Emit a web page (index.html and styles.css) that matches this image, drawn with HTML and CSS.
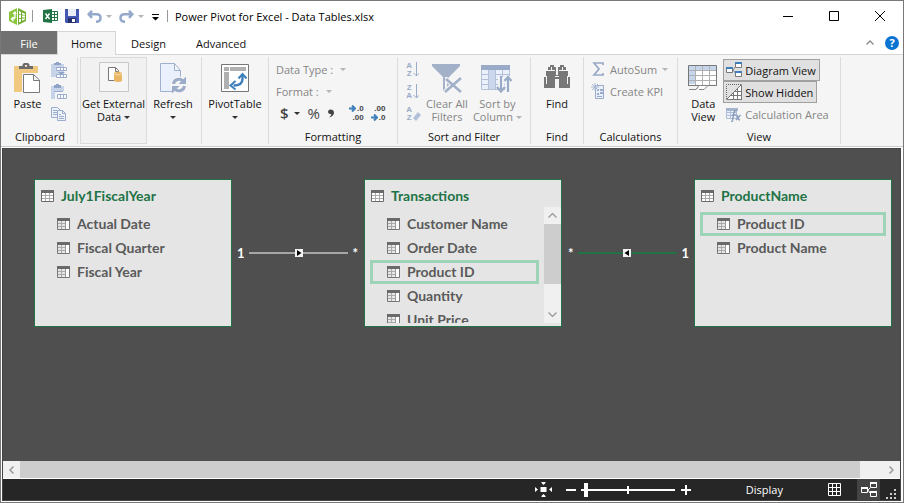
FILE: index.html
```
<!DOCTYPE html>
<html lang="en">
<head>
    <meta charset="UTF-8">
    <title>Power Pivot for Excel - Data Tables.xlsx</title>
    <meta name="viewport" content="width=device-width, initial-scale=1.0">
    <link rel="stylesheet" href="styles.css">
</head>
<body>
    <!-- shared table / column icons -->
    <svg class="defs" width="0" height="0">
        <symbol id="table-icon" viewBox="0 0 13 12">
            <path fill="#fff" d="M0 0h13v12H0z"/>
            <path stroke="#aaa" d="M1 5.500h11M1 8.500h11M4.500 3v8M8.500 3v8"/>
            <path fill="none" stroke="#6a6a6a" d="M.5.5h12v11H.5z"/>
            <path fill="#6a6a6a" d="M0 0h13v3H0z"/>
        </symbol>
        <symbol id="column-icon" viewBox="0 0 13 12">
            <path fill="#e6e6e6" d="M0 0h13v12H0z"/>
            <path fill="#fff" d="M9 3h3v8H9z"/>
            <path stroke="#aaa" d="M1 5.500h8M1 8.500h8M4.500 3v8"/>
            <path stroke="#999" d="M8.500 3v8"/>
            <path fill="none" stroke="#777" d="M.5.5h12v11H.5z"/>
            <path fill="#6a6a6a" d="M0 0h13v3H0z"/>
        </symbol>
    </svg>

    <div class="window">
        <header class="titlebar">
            <svg class="logo" width="17" height="17" viewBox="0 0 17 17">
                <path fill="#8cc63f" d="M8 0v17L0 13V4z"/>
                <path fill="#6fae2c" d="M9 0l8 4v9l-8 4z"/>
                <path fill="#fff" d="M10 3l2 1v2.500l-2-.5zM13 4.500l3 1.200V7l-3-.5zM10 7h2v3h-2zM13 7.500h3v2h-3zM10 11l2-.2v2.700l-2 1zM13 10.700l3-.5v1.300l-3 1.300z"/>
                <path fill="none" stroke="#fff" stroke-width="1.300" d="M6 4v5q0 2-3 2M4 6l2-2 1 2M4.500 9L2.500 11l2 2"/>
            </svg>
            <span class="bar-sep"></span>
            <button class="quick excel" aria-label="Switch to workbook">
                <svg width="15" height="14" viewBox="0 0 15 14">
                    <path fill="#fff" stroke="#217346" d="M8 2.500h6.500v9H8M8 5.500h6M8 8.500h6M11.500 2v10"/>
                    <path fill="#217346" d="M0 1l9-1v14l-9-1z"/>
                    <path stroke="#fff" stroke-width="1.400" d="M2.500 4.500l4 5.500M6.500 4.500L2.500 10"/>
                </svg>
            </button>
            <button class="quick save" aria-label="Save">
                <svg width="14" height="14" viewBox="0 0 14 14">
                    <path fill="#4257b2" d="M0 0h14v14H1l-1-1z"/>
                    <path fill="#e8edf8" d="M3 0h8v7H3z"/>
                    <path fill="#24306e" d="M3 9h8v5H3z"/>
                    <path fill="#fff" d="M7 10h3v3H7z"/>
                </svg>
            </button>
            <button class="quick undo" aria-label="Undo">
                <svg width="15" height="13" viewBox="0 0 15 13"><path fill="none" stroke="#94a9cc" stroke-width="2.500" d="M5 .8L1.700 4.300 5 7.800M2 4.300h7.500q4 0 4 3.700t-4.500 3.800"/></svg>
            </button>
            <span class="arrow dim"></span>
            <button class="quick redo" aria-label="Redo">
                <svg width="15" height="13" viewBox="0 0 15 13"><path fill="none" stroke="#94a9cc" stroke-width="2.500" d="M10 .8l3.300 3.500L10 7.800M13 4.300H5.500q-4 0-4 3.700T6 11.800"/></svg>
            </button>
            <span class="arrow dim"></span>
            <button class="quick customize" aria-label="Customize Quick Access Toolbar">
                <svg width="7" height="7" viewBox="0 0 7 7"><path d="M0 0h7v1H0zM0 3h7L3.500 6.500z"/></svg>
            </button>
            <span class="bar-sep"></span>
            <h1 class="title">Power Pivot for Excel - Data Tables.xlsx</h1>
            <div class="caption">
                <button aria-label="Minimize"><svg width="10" height="10"><path stroke="#000" d="M0 5.500h10"/></svg></button>
                <button aria-label="Maximize"><svg width="10" height="10"><path fill="none" stroke="#000" d="M.5.5h9v9h-9z"/></svg></button>
                <button aria-label="Close"><svg width="10" height="10"><path stroke="#000" d="M0 0l10 10M10 0L0 10"/></svg></button>
            </div>
        </header>

        <nav class="tabs">
            <button class="tab file">File</button>
            <button class="tab active">Home</button>
            <button class="tab">Design</button>
            <button class="tab">Advanced</button>
            <div class="tabs-end">
                <button class="collapse" aria-label="Collapse the ribbon"><svg width="8" height="5"><path fill="none" stroke="#888" stroke-width="1.300" d="M.5 4.500L4 1l3.500 3.500"/></svg></button>
                <button class="help" aria-label="Help">?</button>
            </div>
        </nav>

        <div class="ribbon">
            <section class="group clipboard">
                <div class="tools">
                    <button class="big">
                        <svg width="28" height="32" viewBox="0 0 28 32">
                            <path fill="#f0c880" d="M1 4h24v26H1z"/>
                            <path fill="#f5f5f5" d="M9 11h18v21H9z"/>
                            <path fill="#6d6d6d" d="M6 7V4h3.500V2.500L11 1h4l1.500 1.500V4H20v3zM12 3v2h2V3z"/>
                            <path fill="#fff" stroke="#7a7a7a" d="M10.500 12.500h10l6 5.500v12.500h-16zM20.500 12.500v6h6"/>
                        </svg>
                        <span>Paste</span>
                    </button>
                    <div class="stack">
                        <button class="mini" aria-label="Paste Append">
                            <svg width="16" height="16"><path fill="#c6d3e8" d="M0 2h13v13H0z"/><path fill="#8fa3c6" d="M3 3V1h2V0h3v1h2v2z"/><path fill="#fff" stroke="#9aadcc" d="M5.500 5.500h10v3h-10zM9.500 5v4M12.500 5v4M5.500 12.500h10v3h-10zM9.500 12v4M12.500 12v4"/><path fill="#8fa3c6" d="M7 10h7l-3.500 3z"/></svg>
                        </button>
                        <button class="mini" aria-label="Paste Replace">
                            <svg width="16" height="16"><path fill="#c6d3e8" d="M0 2h13v13H0z"/><path fill="#8fa3c6" d="M3 4V1h2V0h3v1h2v3z"/><path fill="#f5f5f5" d="M4 7h12v9H4z"/><path fill="#fff" stroke="#9aadcc" d="M6.500 10.500h9v4h-9zM9.500 10v5M12.500 10v5M3 7.500h9"/></svg>
                        </button>
                        <button class="mini" aria-label="Copy">
                            <svg width="16" height="16"><path fill="#eef3fb" stroke="#9aadcc" d="M.5 1.500h6l3 3v7h-9zM2 4.500h4M2 6.500h4M2 8.500h4"/><path fill="#eef3fb" stroke="#9aadcc" d="M6.500 4.500h5l3 3v7h-8zM11.500 4.500v3h3M8 8.500h2M8 10.500h5M8 12.500h5"/></svg>
                        </button>
                    </div>
                </div>
                <h2>Clipboard</h2>
            </section>

            <section class="group external">
                <button class="big boxed">
                    <svg width="30" height="30">
                        <path fill="#f5f5f5" stroke="#c8c8c8" d="M.5.5h29v29H.5z"/>
                        <path fill="#fff" stroke="#777" d="M16 18.500H9.500v-13h7l3 3V11M16.500 5.500v4h3"/>
                        <path fill="#e9b665" d="M15 11q4-3 8 0v8q-4 2-8 0z"/>
                        <path fill="none" stroke="#f8dcae" d="M15 12q4 2 8 0"/>
                    </svg>
                    <span>Get External<br>Data <i class="arrow"></i></span>
                </button>
            </section>

            <section class="group refresh">
                <button class="big">
                    <svg width="28" height="32" viewBox="0 0 28 32">
                        <path fill="#eaf1fc" stroke="#9fb1d0" d="M1.500 1.500h14l6 7v21h-20zM15.500 1.500v7h6"/>
                        <circle cx="20" cy="23" r="8.500" fill="#f5f5f5"/>
                        <path fill="none" stroke="#9cadc9" stroke-width="3" d="M14.500 22a5.500 5.500 0 0 1 9.500-3M25.500 24a5.500 5.500 0 0 1-9.500 3"/>
                        <path fill="#9cadc9" d="M27 14.500V22h-7.500zM13 31.500V24h7.500z"/>
                    </svg>
                    <span>Refresh<br><i class="arrow"></i></span>
                </button>
            </section>

            <section class="group pivot">
                <button class="big">
                    <svg width="28" height="32" viewBox="0 0 28 32">
                        <path fill="#fff" stroke="#777" d="M.5 2.500h27v27H.5z"/>
                        <path fill="#b0b0b0" d="M3 5h5v4H3zM9 5h16v4H9zM3 10h5v17H3z"/>
                        <path fill="none" stroke="#3f7fba" stroke-width="2.400" d="M21.500 13v4q0 6.500-9 6.500"/>
                        <path fill="none" stroke="#3f7fba" stroke-width="2" d="M17.500 16.500l4-4.500 4 4.500M14.500 19l-5 4.500 5 4"/>
                    </svg>
                    <span>PivotTable<br><i class="arrow"></i></span>
                </button>
            </section>

            <section class="group formatting">
                <div class="format-rows">
                    <button class="line" disabled>Data Type : <i class="arrow"></i></button>
                    <button class="line" disabled>Format : <i class="arrow"></i></button>
                    <div class="numbers">
                        <button class="currency" aria-label="Currency">$ <i class="arrow"></i></button>
                        <button aria-label="Percent">%</button>
                        <button class="comma" aria-label="Thousands Separator"><svg width="7" height="9"><path fill="#444" d="M2.500.5a2.300 2.300 0 1 0 .8 4.400Q3 7 1 8.500q5-1.500 5-5Q5.800.5 2.500.5z"/></svg></button>
                        <button class="decimal" aria-label="Increase Decimal">
                            <span><svg width="7" height="7"><path fill="none" stroke="#3f7fba" stroke-width="2" d="M0 3.500h5M3 .5l3 3-3 3"/></svg>.0</span>
                            <span>.00</span>
                        </button>
                        <button class="decimal" aria-label="Decrease Decimal">
                            <span>.00</span>
                            <span><svg width="7" height="7"><path fill="none" stroke="#3f7fba" stroke-width="2" d="M0 3.500h5M3 .5l3 3-3 3"/></svg>.0</span>
                        </button>
                    </div>
                </div>
                <h2>Formatting</h2>
            </section>

            <section class="group sorting">
                <div class="tools">
                    <div class="stack">
                        <button class="mini sort" disabled aria-label="Sort A to Z"><span class="letters"><span>A</span><span>Z</span></span><svg width="6" height="15"><path fill="none" stroke="#9aabc8" d="M3.500 0v14M.5 11l3 3 3-3"/></svg></button>
                        <button class="mini sort" disabled aria-label="Sort Z to A"><span class="letters"><span>Z</span><span>A</span></span><svg width="6" height="15"><path fill="none" stroke="#9aabc8" d="M3.500 0v14M.5 11l3 3 3-3"/></svg></button>
                        <button class="mini sort" disabled aria-label="Clear Sort"><span class="letters"><span>A</span><span>Z</span></span><svg width="8" height="15"><path fill="#b3c1d8" d="M5 6l3 3-5 6-3-3z"/></svg></button>
                    </div>
                    <button class="big" disabled>
                        <svg width="30" height="32" viewBox="0 0 30 32">
                            <path fill="#a2b0c8" d="M0 2h28v2L17 15v10l-6 4V15L0 4z"/>
                            <path fill="#f5f5f5" d="M13 15h2v10l-2 1.500z"/>
                            <path stroke="#f5f5f5" stroke-width="5" d="M14 17l15 12M29 16L13 30"/>
                            <path stroke="#a2b0c8" stroke-width="2.600" d="M14 17l15 13M29 16L13 30"/>
                        </svg>
                        <span>Clear All<br>Filters</span>
                    </button>
                    <button class="big" disabled>
                        <svg width="32" height="32" viewBox="0 0 32 32">
                            <path fill="#eaf1fc" stroke="#b3c1d8" d="M.5 3.500h28v24H.5zM0 12.500h28M0 17.500h28M0 22.500h28M7.500 7v20M14.500 7v20M21.500 7v20"/>
                            <path fill="#cbd8eb" d="M8 8h6v19H8z"/>
                            <path fill="#9aabc8" d="M0 3h29v5H0z"/>
                            <path stroke="#f5f5f5" stroke-width="6" d="M20 15v16M27 14v16"/>
                            <path fill="none" stroke="#9aabc8" stroke-width="2.200" d="M20 14v15M16 25l4 4.500 4-4.500M27 30V15M23.500 19l3.500-4 3.500 4"/>
                        </svg>
                        <span>Sort by<br>Column <i class="arrow"></i></span>
                    </button>
                </div>
                <h2>Sort and Filter</h2>
            </section>

            <section class="group find">
                <button class="big">
                    <svg width="26" height="32" viewBox="0 0 26 32">
                        <path fill="#777" d="M6 3h4v2h2v8h2V5h2V3h4v2h2v4h2v6h2v11h-11V17h-4v9H0V15h2V9h2V5h2z"/>
                        <path stroke="#f5f5f5" d="M4 8.500h7M15 8.500h7M2.500 14v8M23.500 14v8M7.500 5v3M18.500 5v3M11 14.500h4"/>
                    </svg>
                    <span>Find</span>
                </button>
                <h2>Find</h2>
            </section>

            <section class="group calculations">
                <div class="format-rows">
                    <button class="line" disabled><svg width="16" height="16"><path fill="none" stroke="#96a8c8" stroke-width="1.700" d="M12 4V2H3l5 6-5 6h9v-2"/></svg>AutoSum <i class="arrow"></i></button>
                    <button class="line" disabled><svg width="16" height="16"><path fill="#eaf1fc" stroke="#9aabc8" d="M4.500 2.500h8v13h-8z"/><path fill="#9aabc8" d="M6 6h2v2H6zM6 10h2v2H6zM9 6h3v2H9zM9 9h3v2H9zM6 13h5v1H6z"/><path stroke="#a9b8d2" d="M4 0v8M0 4h8M1 1l6 6M7 1L1 7"/></svg>Create KPI</button>
                </div>
                <h2>Calculations</h2>
            </section>

            <section class="group view">
                <div class="tools">
                    <button class="big">
                        <svg width="30" height="32" viewBox="0 0 30 32">
                            <path fill="#fff" d="M.5 3.500h28v19H.5z"/>
                            <path fill="#c5d6ec" d="M1 4h27v4H1zM1 4h6v18H1z"/>
                            <path fill="none" stroke="#b0b0b0" d="M0 8.500h28M0 13.500h28M0 18.500h28M7.500 4v19M14.500 4v19M21.500 4v19"/>
                            <path fill="none" stroke="#777" d="M.5 24V3.500h28v20H.5"/>
                            <path fill="#fff" stroke="#888" d="M1 27.500h7l3-4h9l-4 4h-5M8 27.500l2-2"/>
                        </svg>
                        <span>Data<br>View</span>
                    </button>
                    <div class="views">
                        <button class="toggle on">
                            <svg width="16" height="16"><path fill="none" stroke="#888" d="M7 8l3-4M7 8l3 4"/><path fill="#fff" stroke="#777" d="M.5 5.500h6v5h-6zM9.500.5h6v5h-6zM9.500 9.500h6v5h-6z"/><path fill="#3f7fba" d="M0 5h7v2H0zM9 0h7v2H9zM9 9h7v2H9z"/></svg>Diagram View</button>
                        <button class="toggle on">
                            <svg width="16" height="16"><path fill="#fff" d="M1 15L15 1v14z"/><path stroke="#777" d="M1 15.500h14M15.500 1v15M5 11.500h10M9 7.500h6M7.500 9v6M11.500 5v10M.5 15.500l15-15"/><path fill="none" stroke="#666" stroke-dasharray="1 1" d="M.5 15V.5H15"/></svg>Show Hidden</button>
                        <button class="toggle" disabled>
                            <svg width="16" height="16"><path fill="#eaf1fc" stroke="#afbdd5" d="M.5 2.500h10v10H.5zM0 6.500h10M0 9.500h8M4.500 3v9"/><path fill="#a5b5cf" d="M0 2h12v3H0z"/><path fill="none" stroke="#8b9dbd" stroke-width="1.400" d="M10.500 5q-2-1-2.500 1.500l-1.500 8Q6 16 5 15.500M6 9h4M10.500 9q1 0 1.500 2.500t2 2.500M14.500 9l-4.500 5"/></svg>Calculation Area</button>
                    </div>
                </div>
                <h2>View</h2>
            </section>
        </div>

        <main class="workspace">
            <div class="canvas">
                <article class="node node-calendar">
                    <h3><svg width="13" height="12"><use href="#table-icon"/></svg>July1FiscalYear</h3>
                    <div class="node-body">
                        <ul>
                            <li><svg width="13" height="12"><use href="#column-icon"/></svg>Actual Date</li>
                            <li><svg width="13" height="12"><use href="#column-icon"/></svg>Fiscal Quarter</li>
                            <li><svg width="13" height="12"><use href="#column-icon"/></svg>Fiscal Year</li>
                        </ul>
                    </div>
                </article>

                <div class="relation relation-date">
                    <span>1</span>
                    <div class="link"><svg width="8" height="8"><path fill="#f4f4f4" d="M0 0h8v8H0z"/><path d="M2 1l4.500 3L2 7z"/></svg></div>
                    <span class="many">*</span>
                </div>

                <article class="node node-transactions">
                    <h3><svg width="13" height="12"><use href="#table-icon"/></svg>Transactions</h3>
                    <div class="node-body">
                        <ul>
                            <li><svg width="13" height="12"><use href="#column-icon"/></svg>Customer Name</li>
                            <li><svg width="13" height="12"><use href="#column-icon"/></svg>Order Date</li>
                            <li class="selected"><svg width="13" height="12"><use href="#column-icon"/></svg>Product ID</li>
                            <li><svg width="13" height="12"><use href="#column-icon"/></svg>Quantity</li>
                            <li><svg width="13" height="12"><use href="#column-icon"/></svg>Unit Price</li>
                        </ul>
                        <div class="vscroll">
                            <button aria-label="Scroll up"><svg width="9" height="5"><path fill="none" stroke="#999" stroke-width="1.300" d="M.5 4.500l4-4 4 4"/></svg></button>
                            <div class="vthumb"></div>
                            <button class="down" aria-label="Scroll down"><svg width="9" height="5"><path fill="none" stroke="#999" stroke-width="1.300" d="M.5.5l4 4 4-4"/></svg></button>
                        </div>
                    </div>
                </article>

                <div class="relation relation-product">
                    <span class="many">*</span>
                    <div class="link"><svg width="8" height="8"><path fill="#f4f4f4" d="M0 0h8v8H0z"/><path d="M6 1L1.500 4 6 7z"/></svg></div>
                    <span>1</span>
                </div>

                <article class="node node-product">
                    <h3><svg width="13" height="12"><use href="#table-icon"/></svg>ProductName</h3>
                    <div class="node-body">
                        <ul>
                            <li class="selected"><svg width="13" height="12"><use href="#column-icon"/></svg>Product ID</li>
                            <li><svg width="13" height="12"><use href="#column-icon"/></svg>Product Name</li>
                        </ul>
                    </div>
                </article>
            </div>

            <div class="hscroll">
                <button aria-label="Scroll left"><svg width="5" height="8"><path fill="none" stroke="#999" stroke-width="1.500" d="M4.500.5L1 4l3.500 3.500"/></svg></button>
                <div class="hthumb"></div>
                <button class="right" aria-label="Scroll right"><svg width="5" height="8"><path fill="none" stroke="#999" stroke-width="1.500" d="M.5.5L4 4 .5 7.500"/></svg></button>
            </div>

            <footer class="statusbar">
                <button class="fit" aria-label="Fit to screen"><svg width="17" height="15"><path fill="#fff" d="M5.500 5h6v5h-6zM6.500 0h4v1l-2 2-2-2zM6.500 15h4v-1l-2-2-2 2zM0 5l3 2.500L0 10zM17 5l-3 2.500 3 2.500z"/></svg></button>
                <button class="zoom-out" aria-label="Zoom out"><svg width="10" height="10"><path stroke="#fff" stroke-width="2" d="M0 5h10"/></svg></button>
                <input class="zoom" type="range" min="0" max="100" value="4" aria-label="Zoom">
                <button class="zoom-in" aria-label="Zoom in"><svg width="10" height="10"><path stroke="#fff" stroke-width="2" d="M0 5h10M5 0v10"/></svg></button>
                <button class="display">Display</button>
                <button class="grid-view" aria-label="Grid view"><svg width="13" height="13"><path fill="none" stroke="#fff" d="M.5.5h12v12H.5zM0 4.500h13M0 8.500h13M4.500 0v13M8.500 0v13"/></svg></button>
                <button class="diagram-view" aria-label="Diagram view"><svg width="16" height="16"><path fill="none" stroke="#fff" d="M.5 5.500h6v5h-6zM9.500.5h6v5h-6zM9.500 9.500h6v5h-6zM7 8l2-2M7 8l2 3"/><path fill="#fff" d="M0 5h7v2H0zM9 0h7v2H9zM9 9h7v2H9z"/></svg></button>
                <svg class="grip" width="11" height="11"><path fill="#ccc" d="M8 0h2v2H8zM4 4h2v2H4zM8 4h2v2H8zM0 8h2v2H0zM4 8h2v2H4zM8 8h2v2H8z"/></svg>
            </footer>
        </main>
    </div>
</body>
</html>
```

FILE: styles.css
```
* {
    box-sizing: border-box;
}
body {
    margin: 0;
    font: 11px/13px "Open Sans", "Noto Sans", sans-serif;
    color: #111;
}
button {
    margin: 0;
    padding: 0;
    border: 0;
    background: none;
    font: inherit;
    color: inherit;
    white-space: nowrap;
}
h1, h2, h3, ul {
    margin: 0;
    padding: 0;
    font: inherit;
    list-style: none;
}
svg {
    display: block;
    flex: none;
}
.defs {
    position: absolute;
}
.window {
    display: flex;
    flex-direction: column;
    height: 100vh;
    border: 1px solid #787878;
    background: #fff;
}
.arrow {
    display: inline-block;
    border: 3px solid transparent;
    border-top-color: #333;
    border-bottom: 0;
    vertical-align: 2px;
}
.arrow.dim, button:disabled .arrow {
    border-top-color: #b4b4b4;
}

/* title bar */
.titlebar {
    display: flex;
    align-items: center;
    height: 30px;
    padding-left: 8px;
}
.bar-sep {
    width: 1px;
    height: 12px;
    background: #999;
}
.logo {
    margin-right: 6px;
}
.excel {
    margin-left: 10px;
}
.save {
    margin-left: 7px;
}
.undo {
    margin: 0 4px 0 8px;
}
.redo {
    margin: 0 4px 0 7px;
}
.customize {
    margin: 2px 8px 0 8px;
}
.title {
    margin-left: 7px;
    color: #000;
}
.caption {
    display: flex;
    margin-left: auto;
}
.caption button {
    display: flex;
    align-items: center;
    justify-content: center;
    width: 46px;
    height: 28px;
}

/* tabs */
.tabs {
    display: flex;
    height: 23px;
}
.tab {
    padding: 0 14px;
    border: 1px solid transparent;
    border-bottom: 0;
}
.tab.file {
    width: 56px;
    background: #717171;
    color: #fff;
}
.tab.active {
    z-index: 1;
    margin-bottom: -1px;
    padding: 0 13px 1px;
    border-color: #d5d5d5;
    background: #f5f5f5;
}
.tabs-end {
    display: flex;
    align-items: center;
    gap: 11px;
    margin-left: auto;
    padding-right: 4px;
}
.help {
    width: 14px;
    height: 14px;
    border-radius: 50%;
    background: #0b74d1;
    color: #fff;
    font-weight: bold;
    line-height: 14px;
}

/* ribbon */
.ribbon {
    display: flex;
    height: 93px;
    padding-top: 2px;
    border-top: 1px solid #d5d5d5;
    border-bottom: 1px solid #ccc;
    background: #f5f5f5;
}
.group {
    display: flex;
    flex: none;
    flex-direction: column;
    align-items: center;
    height: 87px;
    padding-top: 5px;
    border-right: 1px solid #dcdcdc;
}
.group h2 {
    margin-top: auto;
    line-height: 14px;
}
.tools {
    display: flex;
}
.big {
    display: flex;
    flex-direction: column;
    align-items: center;
    height: 61px;
}
.big span {
    height: 26px;
    margin-top: auto;
}
button:disabled {
    color: #858585;
}
.stack {
    display: flex;
    flex-direction: column;
    gap: 6px;
}
.mini {
    display: flex;
    height: 16px;
}
.clipboard {
    width: 77px;
    padding-left: 2px;
}
.clipboard .tools {
    gap: 9px;
}
.external {
    width: 69px;
    padding: 0 0 0 2px;
    border: 0;
}
.boxed {
    width: 67px;
    height: 87px;
    padding: 4px 0 20px;
    border: 1px solid #dadada;
    background: #f1f1f1;
}
.refresh {
    width: 55px;
    padding-right: 2px;
}
.pivot {
    width: 67px;
}
.formatting {
    width: 129px;
}
.format-rows {
    display: flex;
    flex-direction: column;
    align-items: flex-start;
    width: 100%;
    margin-top: -4px;
    padding-left: 7px;
}
.line {
    display: flex;
    align-items: center;
    gap: 5px;
    height: 22px;
}
.line .arrow {
    margin-left: 2px;
}
.numbers {
    display: flex;
    align-items: center;
    height: 22px;
    padding-left: 4px;
    color: #444;
    font-size: 15px;
}
.numbers button + button {
    margin-left: 8px;
}
.currency {
    display: flex;
    align-items: center;
    gap: 5px;
    font-weight: 600;
}
.numbers .decimal {
    display: flex;
    flex-direction: column;
    align-items: flex-end;
    font: bold 8px/9px "Liberation Sans", Arial, sans-serif;
}
.numbers .comma + .decimal {
    margin-left: 14px;
}
.decimal span {
    display: flex;
    align-items: center;
    gap: 1px;
}
.numbers .decimal + .decimal {
    margin-left: 7px;
}
.sorting {
    width: 133px;
}
.sorting .tools {
    gap: 5px;
}
.sort {
    gap: 1px;
    font: bold 8px/8px "Liberation Sans", Arial, sans-serif;
}
.letters {
    display: flex;
    flex-direction: column;
}
.sort:disabled {
    color: #9aabc8;
}
.find {
    width: 53px;
}
.calculations {
    width: 94px;
}
.calculations .line {
    gap: 3px;
}
.view {
    width: 163px;
}
.view .tools {
    align-items: flex-start;
    gap: 5px;
    padding-left: 3px;
}
.views {
    display: flex;
    flex-direction: column;
    align-items: flex-start;
    margin-top: -3px;
}
.toggle {
    display: flex;
    align-items: center;
    gap: 3px;
    height: 22px;
    padding: 0 3px 0 2px;
    border: 1px solid transparent;
}
.toggle.on {
    border-color: #a0a0a0;
    background: #e0e0e0;
}

/* diagram */
.workspace {
    display: flex;
    flex: 1;
    flex-direction: column;
    min-height: 0;
    margin: 1px 2px 1px 1px;
    border: 1px solid #444;
}
.canvas {
    position: relative;
    flex: 1;
    min-height: 0;
    overflow: hidden;
    background: #4f4f4f;
}
.node {
    position: absolute;
    top: 30px;
    display: flex;
    flex-direction: column;
    width: 198px;
    height: 148px;
    padding-bottom: 3px;
    border: 1px solid #217346;
    background: #e5e5e5;
    color: #5a5a5a;
    font: bold 14px/18px Lato, sans-serif;
}
.node-calendar {
    left: 31px;
}
.node-transactions {
    left: 361px;
}
.node-product {
    left: 691px;
}
.node h3 {
    display: flex;
    align-items: center;
    gap: 7px;
    height: 27px;
    padding: 4px 6px 0;
    color: #217346;
}
.node-body {
    display: flex;
    flex: 1;
    min-height: 0;
    overflow: hidden;
}
.node ul {
    flex: 1;
    padding: 5px 5px 0;
}
.node li {
    display: flex;
    align-items: center;
    gap: 7px;
    height: 24px;
    padding-left: 14px;
    border: 3px solid transparent;
}
.node .selected {
    border-color: #9dd3b6;
}
.vscroll {
    display: flex;
    flex-direction: column;
    width: 17px;
    background: #f0f0f0;
}
.vscroll button, .hscroll button {
    display: flex;
    align-items: center;
    justify-content: center;
    width: 17px;
    height: 17px;
}
.vthumb {
    height: 60px;
    background: #cdcdcd;
}
.down {
    margin-top: auto;
}
.relation {
    position: absolute;
    top: 95px;
    display: flex;
    align-items: center;
    gap: 4px;
    width: 121px;
    height: 18px;
    color: #fff;
    font: bold 13px/18px Lato, sans-serif;
}
.relation-date {
    left: 234px;
}
.relation-product {
    left: 565px;
}
.link {
    display: flex;
    flex: 1;
    align-items: center;
    justify-content: center;
    height: 2px;
    background: #a6a6a6;
}
.relation-product .link {
    background: #217346;
}
.hscroll {
    display: flex;
    height: 18px;
    border-bottom: 1px solid #fff;
    background: #f0f0f0;
}
.hthumb {
    flex: 1;
    margin-right: 23px;
    background: #cdcdcd;
}

/* status bar */
.statusbar {
    display: flex;
    align-items: center;
    justify-content: flex-end;
    height: 21px;
    padding-right: 3px;
    background: #262626;
    color: #fff;
}
.zoom-out {
    margin-left: 14px;
}
.zoom {
    width: 94px;
    height: 14px;
    margin: 0 6px 0 5px;
    appearance: none;
    background: linear-gradient(#fff, #fff) center / 100% 2px no-repeat, linear-gradient(#fff, #fff) center / 2px 8px no-repeat;
}
.zoom::-webkit-slider-thumb {
    appearance: none;
    width: 4px;
    height: 14px;
    background: #fff;
}
.display {
    margin: 0 45px 0 55px;
}
.diagram-view {
    display: flex;
    align-items: center;
    justify-content: center;
    width: 23px;
    height: 21px;
    margin: 0 6px 0 16px;
    background: #444;
}
.grip {
    align-self: flex-end;
}
```
